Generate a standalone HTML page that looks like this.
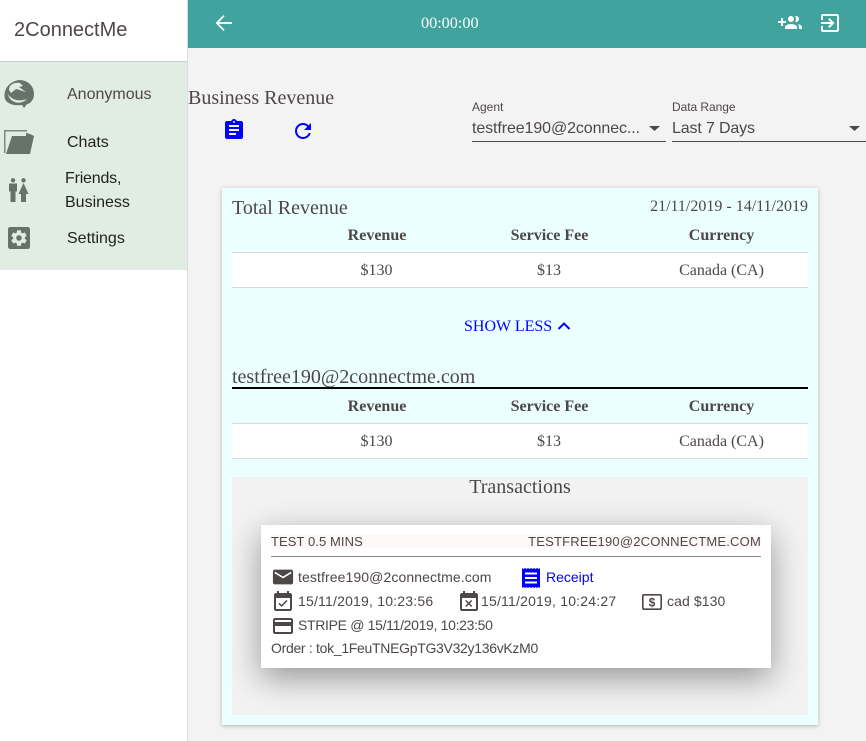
<!DOCTYPE html>
<html><head><meta charset="utf-8"><style>
html,body{margin:0;padding:0;width:866px;height:741px;overflow:hidden;background:#f3f3f3}
.a{position:absolute;white-space:nowrap}
.s{font-family:"Liberation Sans",sans-serif;color:#4e4747}
.r{font-family:"Liberation Serif",serif;color:#4e4747}
.c{transform:translateX(-50%)}
svg{position:absolute;display:block}
</style></head><body>
<div class="a" style="left:0;top:0;width:187px;height:741px;background:#fff;border-right:1px solid #ddd"></div>
<div class="a" style="left:0;top:61px;width:187px;height:1px;background:#ccc"></div>
<div class="a" style="left:0;top:62px;width:187px;height:208px;background:#e1ece3"></div>
<div class="a" style="left:188px;top:0;width:678px;height:48px;background:#40a39d"></div>

<div class="a s" style="left:14px;top:19px;font-size:20px;line-height:23px">2ConnectMe</div>
<svg style="left:4px;top:79px" width="30" height="30" viewBox="0 0 30 30"><path fill="#66736b" d="M15 1C24 1 30 7 30 15 30 21 26 25 23 25L20 29 18 26C10 27 3 25 1 20-1 13 3 3 15 1Z"/><path fill="#e1ece3" d="M5 11C5 5 11 3 16 4L19 7 15 8 22 13 12 10 7 14Z"/><path fill="#e1ece3" d="M3.500 15C8 21 15 23 23 20 17 26 7 25 3.500 15Z"/></svg>
<svg style="left:4px;top:130px" width="30" height="24" viewBox="0 0 30 24"><path fill="#7d8a82" d="M0 0H23V1.500H1.500V23H0Z"/><path fill="#66736b" d="M8 6H22V3L26 4 30 6 26 24H2Z"/></svg>
<svg style="left:8px;top:178px" width="22" height="26" viewBox="0 0 22 26"><circle cx="5" cy="2.300" r="2.200" fill="#66736b"/><circle cx="15.500" cy="2.300" r="2.200" fill="#66736b"/><path fill="#66736b" d="M1 5.500H9V13.500H7.500V24H2.500V13.500H1Z"/><path fill="#66736b" d="M15.500 5 20.500 16H18V24H13V16H10.500Z"/></svg>
<svg style="left:8px;top:227px" width="22" height="22" viewBox="0 0 24 24"><rect width="24" height="24" rx="2.500" fill="#66736b"/><path transform="translate(1.800 1.800) scale(.85)" fill="#e1ece3" d="M19.430 12.980c.04-.32.07-.64.07-.98s-.03-.66-.07-.98l2.110-1.650c.19-.15.24-.42.12-.64l-2-3.460c-.12-.22-.39-.3-.61-.22l-2.490 1c-.52-.4-1.080-.73-1.690-.98l-.38-2.650C14.460 2.180 14.250 2 14 2h-4c-.25 0-.46.18-.49.42l-.38 2.650c-.61.25-1.170.59-1.690.98l-2.490-1c-.23-.09-.49 0-.61.22l-2 3.460c-.13.22-.07.49.12.64l2.110 1.650c-.04.32-.07.65-.07.98s.03.66.07.98l-2.110 1.650c-.19.15-.24.42-.12.64l2 3.460c.12.22.39.3.61.22l2.490-1c.52.4 1.080.73 1.690.98l.38 2.650c.03.24.24.42.49.42h4c.25 0 .46-.18.49-.42l.38-2.650c.61-.25 1.170-.59 1.690-.98l2.490 1c.23.09.49 0 .61-.22l2-3.460c.12-.22.07-.49-.12-.64l-2.110-1.650zM12 15.500c-1.930 0-3.500-1.570-3.500-3.500s1.570-3.500 3.500-3.500 3.500 1.570 3.500 3.500-1.570 3.500-3.500 3.500z"/></svg>
<div class="a s" style="left:67px;top:86px;font-size:16px;line-height:18px">Anonymous</div>
<div class="a s" style="left:67px;top:134px;font-size:16px;line-height:18px;color:#222">Chats</div>
<div class="a s" style="left:65px;top:170px;font-size:16px;line-height:18px;letter-spacing:-.2px;color:#222">Friends,</div>
<div class="a s" style="left:65px;top:194px;font-size:16px;line-height:18px;color:#222">Business</div>
<div class="a s" style="left:67px;top:230px;font-size:16px;line-height:18px;color:#222">Settings</div>

<svg style="left:212px;top:11px" width="24" height="24" viewBox="0 0 24 24"><path fill="none" stroke="#fff" stroke-width="1.700" d="M20 12H5.500M12 4.700 4.800 12 12 19.300"/></svg>
<div class="a r" style="left:421px;top:14px;font-size:16.200px;line-height:18px;color:#fff">00:00:00</div>
<svg style="left:778px;top:11px" width="24" height="24" viewBox="0 0 24 24"><path fill="#fff" d="M8 10H5V7H3v3H0v2h3v3h2v-3h3v-2zm10 1c1.660 0 2.990-1.340 2.990-3S19.660 5 18 5c-.32 0-.63.05-.91.14.57.81.9 1.790.9 2.860s-.34 2.040-.9 2.860c.28.09.59.14.91.14zm-5 0c1.660 0 2.990-1.340 2.990-3S14.660 5 13 5c-1.660 0-3 1.340-3 3s1.340 3 3 3zm6.620 2.160c.83.73 1.380 1.660 1.380 2.840v2h3v-2c0-1.540-2.370-2.490-4.380-2.840zM13 13c-2 0-6 1-6 3v2h12v-2c0-2-4-3-6-3z"/></svg>
<svg style="left:818px;top:11px" width="24" height="24" viewBox="0 0 24 24"><path fill="#fff" d="M10.090 15.590L11.500 17l5-5-5-5-1.410 1.410L12.670 11H3v2h9.670l-2.580 2.590zM19 3H5c-1.110 0-2 .9-2 2v4h2V5h14v14H5v-4H3v4c0 1.100.89 2 2 2h14c1.100 0 2-.9 2-2V5c0-1.100-.9-2-2-2z"/></svg>

<div class="a r" style="left:188px;top:87px;font-size:20px;line-height:23px">Business Revenue</div>
<svg style="left:222px;top:118px" width="24" height="24" viewBox="0 0 24 24"><path fill="#0000ff" d="M19 3h-4.180C14.400 1.840 13.300 1 12 1c-1.300 0-2.400.84-2.820 2H5c-1.100 0-2 .9-2 2v14c0 1.100.9 2 2 2h14c1.100 0 2-.9 2-2V5c0-1.100-.9-2-2-2zm-7 0c.55 0 1 .45 1 1s-.45 1-1 1-1-.45-1-1 .45-1 1-1zm2 14H7v-2h7v2zm3-4H7v-2h10v2zm0-4H7V7h10v2z"/></svg>
<svg style="left:291px;top:119px" width="24" height="24" viewBox="0 0 24 24"><path fill="#0000ff" d="M17.650 6.350C16.200 4.900 14.210 4 12 4c-4.420 0-7.990 3.580-7.990 8s3.570 8 7.990 8c3.730 0 6.840-2.550 7.730-6h-2.080c-.82 2.330-3.040 4-5.650 4-3.310 0-6-2.690-6-6s2.690-6 6-6c1.660 0 3.140.69 4.220 1.780L13 11h7V4l-2.350 2.350z"/></svg>

<div class="a s" style="left:472px;top:100px;font-size:12px;line-height:14px">Agent</div>
<div class="a s" style="left:472px;top:120px;font-size:16px;line-height:18px;letter-spacing:-.1px">testfree190@2connec...</div>
<svg style="left:649px;top:126px" width="11" height="5" viewBox="0 0 11 5"><path fill="#4e4747" d="M0 0H11L5.500 5Z"/></svg>
<div class="a" style="left:472px;top:141px;width:194px;height:1px;background:#4e4747"></div>
<div class="a s" style="left:672px;top:100px;font-size:12px;line-height:14px;letter-spacing:-.05px">Data Range</div>
<div class="a s" style="left:672px;top:120px;font-size:16px;line-height:18px;letter-spacing:-.15px">Last 7 Days</div>
<svg style="left:849px;top:126px" width="11" height="5" viewBox="0 0 11 5"><path fill="#4e4747" d="M0 0H11L5.500 5Z"/></svg>
<div class="a" style="left:672px;top:141px;width:194px;height:1px;background:#4e4747"></div>

<div class="a" style="left:222px;top:188px;width:596px;height:537px;background:#ebfffe;box-shadow:0 1px 4px rgba(0,0,0,.25)"></div>
<div class="a r" style="left:232px;top:197px;font-size:20px;line-height:23px">Total Revenue</div>
<div class="a r" style="right:58px;top:198px;font-size:16px;line-height:18px">21/11/2019 - 14/11/2019</div>

<div class="a r c" style="left:377px;top:227px;font-size:16px;line-height:18px;font-weight:bold">Revenue</div>
<div class="a r c" style="left:549.500px;top:227px;font-size:16px;line-height:18px;font-weight:bold">Service Fee</div>
<div class="a r c" style="left:721.500px;top:227px;font-size:16px;line-height:18px;font-weight:bold">Currency</div>
<div class="a" style="left:232px;top:252px;width:576px;height:34px;background:#fff;border-top:1px solid #d5dcdc;border-bottom:1px solid #d5dcdc"></div>
<div class="a r c" style="left:376.500px;top:262px;font-size:16px;line-height:18px">$130</div>
<div class="a r c" style="left:549px;top:262px;font-size:16px;line-height:18px">$13</div>
<div class="a r c" style="left:721.500px;top:262px;font-size:16px;line-height:18px">Canada (CA)</div>

<div class="a r" style="left:464px;top:318px;font-size:16px;line-height:18px;color:#0000ff">SHOW LESS</div>
<svg style="left:556px;top:318px" width="16" height="16" viewBox="0 0 16 16"><path fill="none" stroke="#0000ff" stroke-width="2" d="M2.500 11 8 5.500 13.500 11"/></svg>

<div class="a r" style="left:232px;top:366px;font-size:20px;line-height:23px">testfree190@2connectme.com</div>
<div class="a" style="left:232px;top:387px;width:576px;height:2px;background:#000"></div>

<div class="a r c" style="left:377px;top:398px;font-size:16px;line-height:18px;font-weight:bold">Revenue</div>
<div class="a r c" style="left:549.500px;top:398px;font-size:16px;line-height:18px;font-weight:bold">Service Fee</div>
<div class="a r c" style="left:721.500px;top:398px;font-size:16px;line-height:18px;font-weight:bold">Currency</div>
<div class="a" style="left:232px;top:423px;width:576px;height:34px;background:#fff;border-top:1px solid #d5dcdc;border-bottom:1px solid #d5dcdc"></div>
<div class="a r c" style="left:376.500px;top:433px;font-size:16px;line-height:18px">$130</div>
<div class="a r c" style="left:549px;top:433px;font-size:16px;line-height:18px">$13</div>
<div class="a r c" style="left:721.500px;top:433px;font-size:16px;line-height:18px">Canada (CA)</div>

<div class="a" style="left:232px;top:477px;width:576px;height:238px;background:#f2f2f2"></div>
<div class="a r c" style="left:520px;top:476px;font-size:20px;line-height:23px">Transactions</div>

<div class="a" style="left:261px;top:525px;width:510px;height:143px;background:#fff;box-shadow:0 10px 30px rgba(0,0,0,.38)"></div>
<div class="a" style="left:271px;top:535px;width:490px;height:13px;background:#fff8f8"></div>
<div class="a s" style="left:271px;top:534px;font-size:13px;line-height:15px;letter-spacing:.08px">TEST 0.5 MINS</div>
<div class="a s" style="right:105px;top:534px;font-size:13px;line-height:15px;letter-spacing:.2px">TESTFREE190@2CONNECTME.COM</div>
<div class="a" style="left:271px;top:556px;width:490px;height:1px;background:#888"></div>

<svg style="left:272px;top:566px" width="22" height="22" viewBox="0 0 24 24"><path fill="#4e4747" d="M21 4H3C1.900 4 1 4.900 1 6v12c0 1.100.9 2 2 2h18c1.100 0 2-.9 2-2V6c0-1.100-.9-2-2-2zm0 4l-9 5.500L3 8V6l9 5.500L21 6v2z"/></svg>
<div class="a s" style="left:298px;top:569px;font-size:14px;line-height:16px;letter-spacing:.1px">testfree190@2connectme.com</div>
<svg style="left:519px;top:566px" width="24" height="24" viewBox="0 0 24 24"><path fill="#0000ff" d="M3 2 4.500 3 6 2 7.500 3 9 2 10.500 3 12 2 13.500 3 15 2 16.500 3 18 2 19.500 3 21 2V22L19.500 21 18 22 16.500 21 15 22 13.500 21 12 22 10.500 21 9 22 7.500 21 6 22 4.500 21 3 22Z"/><path fill="#fff" d="M6 6.500h12v2H6zM6 11h12v2H6zM6 15.500h12v2H6z"/></svg>
<div class="a s" style="left:546px;top:569px;font-size:14px;line-height:16px;color:#0000ff">Receipt</div>

<svg style="left:271px;top:590px" width="24" height="24" viewBox="0 0 24 24"><path fill="#4e4747" d="M16.530 11.060L15.470 10l-4.880 4.880-2.120-2.120-1.060 1.060L10.590 17l5.940-5.940zM19 3h-1V1h-2v2H8V1H6v2H5c-1.110 0-2 .9-2 2v14c0 1.100.89 2 2 2h14c1.100 0 2-.9 2-2V5c0-1.100-.9-2-2-2zm0 16H5V8h14v11z"/></svg>
<div class="a s" style="left:298px;top:593px;font-size:14px;line-height:16px;letter-spacing:.2px">15/11/2019, 10:23:56</div>
<svg style="left:457px;top:590px" width="24" height="24" viewBox="0 0 24 24"><path fill="#4e4747" d="M9.310 17l2.440-2.440L14.190 17l1.060-1.060-2.440-2.440 2.440-2.440L14.190 10l-2.440 2.440L9.310 10l-1.060 1.060 2.440 2.440-2.440 2.440L9.310 17zM19 3h-1V1h-2v2H8V1H6v2H5c-1.110 0-2 .9-2 2v14c0 1.100.89 2 2 2h14c1.100 0 2-.9 2-2V5c0-1.100-.9-2-2-2zm0 16H5V8h14v11z"/></svg>
<div class="a s" style="left:481px;top:593px;font-size:14px;line-height:16px;letter-spacing:.2px">15/11/2019, 10:24:27</div>
<svg style="left:640px;top:590px" width="24" height="24" viewBox="0 0 24 24"><rect x="2.800" y="4.800" width="18.400" height="14.400" rx="1.200" fill="none" stroke="#4e4747" stroke-width="1.600"/><text x="12" y="16.500" font-family="Liberation Sans" font-size="12" font-weight="bold" text-anchor="middle" fill="#4e4747">$</text></svg>
<div class="a s" style="left:667px;top:593px;font-size:14px;line-height:16px;letter-spacing:.1px">cad $130</div>

<svg style="left:271px;top:614px" width="24" height="24" viewBox="0 0 24 24"><path fill="#4e4747" d="M20 4H4c-1.110 0-1.990.89-1.990 2L2 18c0 1.110.89 2 2 2h16c1.110 0 2-.89 2-2V6c0-1.110-.89-2-2-2zm0 14H4v-6h16v6zm0-10H4V6h16v2z"/></svg>
<div class="a s" style="left:298px;top:617px;font-size:14px;line-height:16px;letter-spacing:-.32px">STRIPE @ 15/11/2019, 10:23:50</div>
<div class="a s" style="left:271px;top:640px;font-size:14px;line-height:16px;letter-spacing:-.3px">Order : tok_1FeuTNEGpTG3V32y136vKzM0</div>
</body></html>
